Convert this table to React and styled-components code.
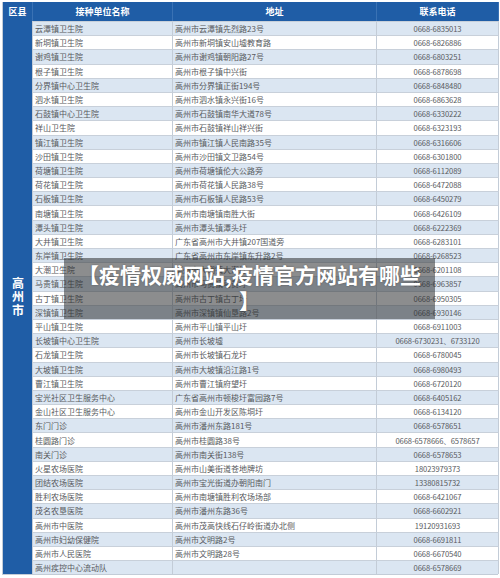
import React from 'react'
import styled, { createGlobalStyle } from 'styled-components'

const GlobalStyle = createGlobalStyle`
  body {
    margin: 0;
    background: #ffffff;
    font-family: "Noto Sans CJK SC", "Liberation Sans", sans-serif;
  }
`

const rows = [
  ['云潭镇卫生院', '高州市云潭镇先烈路23号', '0668-6835013'],
  ['新垌镇卫生院', '高州市新垌镇安山墟教育路', '0668-6826886'],
  ['谢鸡镇卫生院', '高州市谢鸡镇朝阳路27号', '0668-6803251'],
  ['根子镇卫生院', '高州市根子镇中兴街', '0668-6878698'],
  ['分界镇中心卫生院', '高州市分界镇正街194号', '0668-6848480'],
  ['泗水镇卫生院', '高州市泗水镇永兴街16号', '0668-6863628'],
  ['石鼓镇中心卫生院', '高州市石鼓镇南华大道78号', '0668-6330222'],
  ['祥山卫生院', '高州市石鼓镇祥山祥兴街', '0668-6323193'],
  ['镇江镇卫生院', '高州市镇江镇人民南路35号', '0668-6316606'],
  ['沙田镇卫生院', '高州市沙田镇文卫路54号', '0668-6301800'],
  ['荷塘镇卫生院', '高州市荷塘镇伦大公路旁', '0668-6112089'],
  ['荷花镇卫生院', '高州市荷花镇人民路38号', '0668-6472088'],
  ['石板镇卫生院', '高州市石板镇人民路53号', '0668-6450279'],
  ['南塘镇卫生院', '高州市南塘镇南胜大街', '0668-6426109'],
  ['潭头镇卫生院', '高州市潭头镇潭头圩', '0668-6222369'],
  ['大井镇卫生院', '广东省高州市大井镇207国道旁', '0668-6283101'],
  ['东岸镇卫生院', '广东省高州市东岸镇东升路2号', '0668-6268523'],
  ['大潮卫生院', '高州市大潮镇大潮圩', '0668-6201108'],
  ['马贵镇卫生院', '高州市马贵镇马贵圩', '0668-6963857'],
  ['古丁镇卫生院', '高州市古丁镇古丁圩', '0668-6950305'],
  ['深镇镇卫生院', '高州市深镇镇仙垦路2号', '0668-6930146'],
  ['平山镇卫生院', '高州市平山镇平山圩', '0668-6911003'],
  ['长坡镇中心卫生院', '高州市长坡墟', '0668-6730231、6733120'],
  ['石龙镇卫生院', '高州市长坡镇石龙圩', '0668-6780045'],
  ['大坡镇卫生院', '高州市大坡镇沿江路1号', '0668-6980493'],
  ['曹江镇卫生院', '高州市曹江镇府望圩', '0668-6720120'],
  ['宝光社区卫生服务中心', '广东省高州市顿梭圩富园路7号', '0668-6405162'],
  ['金山社区卫生服务中心', '高州市金山开发区陈垌圩', '0668-6134120'],
  ['东门门诊', '高州市潘州东路181号', '0668-6578651'],
  ['桂圆路门诊', '高州市桂圆路38号', '0668-6578666、6578657'],
  ['南关门诊', '高州市南关街138号', '0668-6578653'],
  ['火星农场医院', '高州市山美街道苍地牌坊', '18023979373'],
  ['团结农场医院', '高州市宝光街道办朝阳南门', '13380815732'],
  ['胜利农场医院', '高州市南塘镇胜利农场场部', '0668-6421067'],
  ['茂名农垦医院', '高州市潘州东路36号', '0668-6602921'],
  ['高州市中医院', '高州市茂高快线石仔岭街道办北侧', '19120931693'],
  ['高州市妇幼保健院', '高州市文明路2号', '0668-6691811'],
  ['高州市人民医院', '高州市文明路28号', '0668-6670540'],
  ['高州疾控中心流动队', '', '0668-6578669'],
]

const Page = styled.div`
  position: relative;
  padding: 2px;
`

const Table = styled.div`
  display: grid;
  grid-template-columns: 30px 140px 204px 122px;
  grid-template-rows: 19px repeat(${ props => props.count }, 14.2px);
  border-left: 1px solid #c3ccd7;
  border-bottom: 1px solid #c3ccd7;
  width: 496px;
  box-sizing: border-box;
`

const HeadCell = styled.div`
  background: #1f5da6;
  color: #ffffff;
  font-size: 9px;
  font-weight: 700;
  display: flex;
  align-items: center;
  justify-content: center;
  border-right: 1px solid #3a72b4;
`

const District = styled.div`
  grid-column: 1;
  grid-row: 2 / span ${ props => props.span };
  background: #1f5da6;
  color: #ffffff;
  font-size: 12px;
  font-weight: 700;
  line-height: 14px;
  display: flex;
  align-items: center;
  justify-content: center;
  text-align: center;
  writing-mode: vertical-rl;
  letter-spacing: 1.5px;
  border-right: 1px solid #c3ccd7;
`

const Cell = styled.div`
  background: ${ props => props.striped ? '#dbe6f2' : '#ffffff' };
  color: #585a5e;
  font-size: 8px;
  line-height: 13px;
  padding: 0 2px;
  white-space: nowrap;
  overflow: hidden;
  display: flex;
  align-items: center;
  justify-content: ${ props => props.center ? 'center' : 'flex-start' };
  border-right: 1px solid #c3ccd7;
  border-top: 1px solid #c8d0da;
  box-sizing: border-box;
`

const Phone = styled(Cell)`
  font-size: 7.6px;
  letter-spacing: -0.1px;
`

const Overlay = styled.div`
  position: absolute;
  left: 64px;
  top: 258px;
  width: 371px;
  height: 61px;
  box-sizing: border-box;
  padding: 3px 10px;
  background: rgba(45, 47, 50, 0.55);
  color: #ffffff;
  font-size: 21px;
  font-weight: 700;
  line-height: 26px;
  text-align: center;
  line-break: anywhere;
  text-shadow: 0 0 2px rgba(0, 0, 0, 0.35);
`

export default function App() {
  return (
    <Page>
      <GlobalStyle />
      <Table count={ rows.length }>
        <HeadCell>区县</HeadCell>
        <HeadCell>接种单位名称</HeadCell>
        <HeadCell>地址</HeadCell>
        <HeadCell>联系电话</HeadCell>
        <District span={ rows.length }>高州市</District>
        { rows.map(( [name, addr, phone], i ) => (
          <React.Fragment key={ name }>
            <Cell striped={ i % 2 === 0 }>{ name }</Cell>
            <Cell striped={ i % 2 === 0 }>{ addr }</Cell>
            <Phone striped={ i % 2 === 0 } center>{ phone }</Phone>
          </React.Fragment>
        )) }
      </Table>
      <Overlay>【疫情权威网站,疫情官方网站有哪些】</Overlay>
    </Page>
  )
}
